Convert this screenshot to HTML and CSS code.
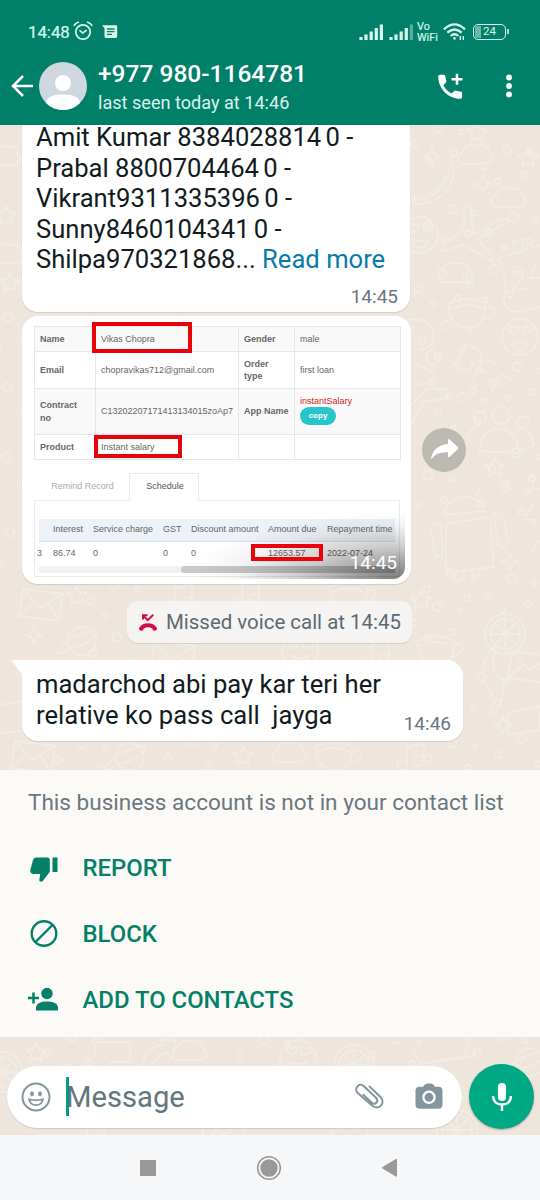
FILE: index.html
```html
<!DOCTYPE html>
<html lang="en">
<head>
<meta charset="utf-8">
<title>Chat</title>
<link rel="stylesheet" href="styles.css">
</head>
<body>
<div class="phone">
  <header class="top">
    <div class="status">
      <span class="clock">14:48</span>
      <svg class="alarm" width="20" height="20" viewBox="0 0 20 20" fill="none" stroke="currentColor" stroke-width="1.7" stroke-linecap="round"><circle cx="10" cy="11" r="7.2"/><path d="M7 9.7l2.7 2.4 3.4-2.6M1.2 4.3Q2.8 1.9 5.3 1.2M18.8 4.3Q17.2 1.9 14.7 1.2"/></svg>
      <svg class="msg" width="16" height="14" viewBox="0 0 16 14"><path fill="currentColor" d="M0 .3h14q1.2 0 1.2 1.2v10q0 1.4-1.4 1.4H4q-1.5 0-1.5-1.5V3.2z"/><path stroke="#008069" stroke-width="1.3" d="M5 4h7.5M5 6.7h7.5M5 9.4h5"/></svg>
      <span class="grow"></span>
      <svg class="bars" width="25" height="16" viewBox="0 0 25 16" stroke="currentColor" stroke-width="3.200"><path d="M2 16v-3M7 16v-5.500M12.200 16V7.500M17.300 16V4M22.400 16V.5"/></svg>
      <svg class="bars2" width="25" height="16" viewBox="0 0 25 16" stroke="currentColor" stroke-width="3.200"><path d="M2 16v-3M7 16v-5.500M12.200 16V7.500M17.300 16V4"/><path opacity=".4" d="M22.400 16V.5"/></svg>
      <span class="vowifi"><span>Vo</span><span>WiFi</span></span>
      <svg class="wifi" width="23" height="18" viewBox="0 0 23 18" fill="none" stroke="currentColor" stroke-width="2.3"><path d="M1 6.300Q11.500-3.500 22 6.300M4.300 9.700q7.200-6.500 14.400 0M7.600 13q3.900-3.500 7.800 0"/><circle cx="11.500" cy="15.400" r="1.300" fill="currentColor" stroke="none"/><path stroke-width="1.400" d="M17.300 13v4M20.300 13v4"/></svg>
      <span class="battery"><span class="level">24</span></span><i class="tip"></i>
    </div>
    <div class="appbar">
      <svg class="back" width="23" height="22" viewBox="0 0 23 22" fill="none" stroke="#fff" stroke-width="2.500"><path d="M22 11H2.500M12 1L2 11l10 10"/></svg>
      <svg class="avatar" width="48" height="48" viewBox="0 0 48 48"><defs><clipPath id="disc"><circle cx="24" cy="24" r="24"/></clipPath></defs><g clip-path="url(#disc)"><path fill="#cfd8df" d="M0 0h48v48H0z"/><circle cx="24" cy="21" r="8" fill="#fff"/><path fill="#fff" d="M7 48V42q0-9.500 17-9.500T41 42v6z"/></g></svg>
      <div class="peer"><div class="number">+977 980-1164781</div><div class="seen">last seen today at 14:46</div></div>
      <svg class="call" width="27" height="27" viewBox="0 0 27 27"><path fill="#fff" d="M3 1.700H6.800q1.500 0 1.600 1.500.2 2.500.9 4.500.4 1-.4 1.800L6.400 12.200q2.800 5.600 8.200 8.400l2.700-2.500q.8-.7 1.800-.4 2 .7 4.500.9 1.500.1 1.500 1.600V24q0 1.800-1.800 1.800C11 25.800 1.200 15.500 1.200 3.500q0-1.800 1.800-1.800z"/><path stroke="#fff" stroke-width="2.500" d="M14.500 6.300h11M20 .8v11"/></svg>
      <svg class="dots" width="6" height="24" viewBox="0 0 6 24" fill="#fff"><circle cx="3" cy="3.500" r="2.900"/><circle cx="3" cy="12" r="2.900"/><circle cx="3" cy="20.500" r="2.900"/></svg>
    </div>
  </header>

  <main class="chat">
    <svg class="wallpaper" width="540" height="1010" viewBox="0 125 540 1010" fill="none" stroke="#f7f1ea" stroke-width="1.800" stroke-linejoin="round" stroke-linecap="round">
      <defs>
        <path id="star" d="M0-9l3 6 7 1-5 4 1 7-6-3-6 3 1-7-5-4 7-1z"/>
        <path id="spark" d="M0-9q1 8 9 9-8 1-9 9-1-8-9-9 8-1 9-9z"/>
        <path id="cloud" d="M-14 8q-8-7 1-12 4-11 14-6 12-3 12 6 8 8-3 12z"/>
        <g id="face"><circle r="18"/><path d="M-9-5q-5-5 0-6 2 0 3 2 4-4 5 0 0 3-6 6zM4-5q-3-6 1-6 2 0 3 2 4-4 5 1 0 3-7 5zM-8 4q8 4 16 0-1 9-8 9t-8-9z"/></g>
        <g id="cup"><path d="M-20-9q19-9 37-1 1 23-15 25-20 0-22-24zM17-5q9-3 9 3t-12 9M-17-4q17-8 31 0"/></g>
        <g id="orange"><circle r="20"/><circle r="15"/><path d="M0-15v30M-15 0h30M-11-11l22 22M-11 11l22-22"/></g>
        <g id="mail"><path d="M-20-14l40 5-4 27-40-5zM-20-14L-3 5 20-9M-24 13L-9 0M16 18L6 2"/></g>
        <g id="planet"><circle r="14"/><path d="M-12 7q-16 10-12 3 7-12 24-17 20-8 15 0-8 11-27 14z"/></g>
        <g id="note"><circle cx="-8" cy="11" r="5"/><circle cx="9" cy="7" r="5"/><path d="M-3 10v-22l17-4V6M-3-7l17-4"/></g>
        <g id="bits"><circle cx="-22" cy="3" r="3.500"/><circle cx="2" cy="-13" r="4.500"/><circle cx="18" cy="12" r="3"/><circle cx="-7" cy="18" r="2.500"/><circle cx="25" cy="-9" r="2.500"/></g>
      </defs>
      <use href="#star" x="477" y="132"/><use href="#star" x="528" y="157"/><use href="#star" x="495" y="467"/><use href="#star" x="421" y="600"/><use href="#star" x="6" y="215"/><use href="#star" x="77" y="595"/><use href="#star" x="36" y="1052"/><use href="#star" x="243" y="755"/><use href="#star" x="10" y="282"/>
      <use href="#spark" x="432" y="157"/><use href="#spark" x="483" y="184"/><use href="#spark" x="510" y="562"/><use href="#spark" x="34" y="635"/><use href="#spark" x="503" y="725"/>
      <use href="#cloud" x="476" y="156"/><use href="#cloud" x="509" y="199"/><use href="#cloud" x="456" y="274"/><use href="#cloud" x="190" y="1052"/><use href="#cloud" x="4" y="157"/><use href="#cloud" x="8" y="255"/>
      <path d="M451 160q6 7 0 23-10 22-38 21v-4q26-1 35-23 2-8 3-17zM446 176q-8 19-34 22"/>
      <path d="M464 207q4-8 7 2l2 26 24-14q12-4 13 0l-33 18 14 15q5 7-1 6l-27-15-20 6q-4-2 2-7l19-15z"/>
      <path d="M498 259l42-14M498 259q10 20 6 36-1 16 11 17l25-5M515 252l-2-11 9-2 2 10M511 272q2-9 10-3 7 6-9 21l14-1M537 263l-8 15h12"/>
      <path d="M465 345l-10 20 8 5q9 2 9-7 9 0 9-8-1-8-16-10zM483 359l-10 20M483 359l12 5M479 368l9 5M501 374l-11 20M501 374l10 5M497 382l8 4M411 405l16-16h20v9l-23 4-14 24"/>
      <circle cx="501" cy="415" r="9"/><circle cx="480" cy="417" r="6"/><circle cx="523" cy="422" r="6"/><path d="M479 451q3-22 20-22t20 24zM468 440q1-14 12-14M517 429q15-2 17 17l-13 4"/>
      <path d="M444 515q4-18 21-18 16 0 21 14zM443 497l6 5M480 488l-3 8M446 524l44-7 4 50-48 6zM441 525q-8-4-10 5l4 25q4 4 8-1zM493 514q6-5 11 4l4 24q-2 9-9 4zM455 571v9q6 3 9-3v-9M471 568l3 10q7 0 6-12"/>
      <path d="M526 482q7-8 9-4l-3 11h8M533 505l-9 15h11l-2 10M532 551q8-14 10-8"/>
      <use href="#face" x="420" y="235"/><use href="#face" x="520" y="337"/><use href="#cup" x="468" y="313"/>
      <path d="M400 329q4-10 13-10 21 1 21 18 0 11-15 12M427 354q5-9 8-1 9-2 5 6-3 5-9 6-7-5-4-11zM414 365q20 4 20 12t-17 7"/>
      <use href="#planet" x="82" y="641"/><use href="#mail" x="43" y="603"/><use href="#mail" x="532" y="665"/><use href="#orange" x="505" y="634"/><use href="#orange" x="354" y="1065"/><use href="#orange" x="2" y="1072"/><use href="#face" x="300" y="652"/><use href="#face" x="298" y="1058"/>
      <use href="#note" x="178" y="595"/><use href="#note" x="245" y="592"/><use href="#cup" x="350" y="596"/><use href="#cup" x="437" y="650"/><use href="#mail" x="175" y="655"/><use href="#note" x="375" y="652"/>
      <path d="M0 705l27-5 2 30-28 3M95 1056v-14h35v20h-19v18M142 1071q0-22 22-27l-5-5 17 2-4 18-6-7q-15 8-17 20M412 1046l8 18 45-8 4-20M420 1064l52-7 3-9M497 648q-9 18 2 30t-5 37q-8 3-3-6 5-10-2-20-13-20 3-41zM507 713l33-7v24l-32 5z"/>
      <use href="#mail" x="35" y="755"/><use href="#planet" x="130" y="757"/><use href="#cup" x="335" y="756"/><use href="#note" x="410" y="754"/><use href="#cloud" x="290" y="754"/><use href="#planet" x="530" y="1062"/><use href="#mail" x="225" y="1130"/><use href="#orange" x="457" y="1130"/><use href="#note" x="90" y="1132"/><use href="#face" x="350" y="1132"/>
      <use href="#bits" x="436" y="141"/><use href="#bits" x="505" y="163"/><use href="#bits" x="450" y="222"/><use href="#bits" x="511" y="230"/><use href="#bits" x="440" y="286"/><use href="#bits" x="492" y="282"/><use href="#bits" x="444" y="338"/><use href="#bits" x="455" y="379"/><use href="#bits" x="515" y="380"/><use href="#bits" x="460" y="410"/><use href="#bits" x="514" y="466"/><use href="#bits" x="426" y="488"/><use href="#bits" x="503" y="500"/><use href="#bits" x="449" y="586"/><use href="#bits" x="510" y="592"/><use href="#bits" x="435" y="620"/><use href="#bits" x="115" y="650"/><use href="#bits" x="112" y="598"/><use href="#bits" x="480" y="690"/><use href="#bits" x="520" y="752"/><use href="#bits" x="190" y="755"/><use href="#bits" x="450" y="756"/><use href="#bits" x="80" y="757"/><use href="#bits" x="500" y="1050"/><use href="#bits" x="262" y="1053"/><use href="#bits" x="70" y="1050"/><use href="#bits" x="394" y="1052"/><use href="#bits" x="6" y="330"/><use href="#bits" x="5" y="400"/><use href="#bits" x="5" y="470"/><use href="#bits" x="8" y="545"/>
    </svg>

    <section class="bubble contacts">
      <p>Amit Kumar 8384028814<span class="thin"> </span>0 -<br>Prabal 8800704464<span class="thin"> </span>0 -<br>Vikrant9311335396<span class="thin"> </span>0 -<br>Sunny8460104341<span class="thin"> </span>0 -<br>Shilpa970321868... <span class="more">Read more</span></p>
      <time>14:45</time>
    </section>

    <div class="photo-row">
      <section class="bubble photo">
        <div class="shot">
          <div class="details">
            <b>Name</b><span>Vikas Chopra</span><b>Gender</b><span>male</span>
            <b>Email</b><span>chopravikas712@gmail.com</span><b>Order<br>type</b><span>first loan</span>
            <b>Contract<br>no</b><span>C13202207171413134015zoAp7</span><b>App Name</b><span class="app"><em>instantSalary</em><i>copy</i></span>
            <b>Product</b><span>Instant salary</span><b></b><span></span>
          </div>
          <div class="tabs"><span class="off">Remind Record</span><span class="on">Schedule</span><span class="rest"></span></div>
          <div class="sheet">
            <div class="cols head"><span></span><span>Interest</span><span>Service charge</span><span>GST</span><span>Discount amount</span><span>Amount due</span><span>Repayment time</span></div>
            <div class="cols"><span class="cut">3</span><span>86.74</span><span>0</span><span>0</span><span>0</span><span>12653.57</span><span>2022-07-24</span></div>
            <div class="scroll"><i></i></div>
          </div>
          <div class="shade"></div>
          <i class="mark m1"></i><i class="mark m2"></i><i class="mark m3"></i>
          <time>14:45</time>
        </div>
      </section>
      <svg class="forward" width="44" height="44" viewBox="0 0 44 44"><circle cx="22" cy="22" r="22" fill="#bcb9b2"/><path fill="#fff" d="M26 11.500q.5-1 1.400-.2l8.600 8q.7.800 0 1.600l-8.600 8q-1 .8-1.400-.4v-4.300Q14 23.500 9 31.500 10.500 17.500 26 16z"/></svg>
    </div>

    <div class="missed">
      <svg width="18" height="17" viewBox="0 0 18 17"><path fill="#d30a47" d="M.6 16q-1-.9-.4-2.300Q3.300 9.300 9 9.300t8.800 4.400q.6 1.400-.4 2.300-1.400 1-2.800.4-1.200-.5-1.300-2-4.300-2.100-8.600 0-.1 1.500-1.300 2-1.400.6-2.800-.4z"/><path fill="none" stroke="#d30a47" stroke-width="2" d="M4 5.500V1.300h4.500M4 1.500l4.800 4.700 5.400-5.400"/></svg>
      <span>Missed voice call at 14:45</span>
    </div>

    <section class="bubble last">
      <svg class="tail" width="13" height="14" viewBox="0 0 13 14"><path fill="#fff" d="M1.200 0H13v14h-3L.6 1.700Q-.2.300 1.200 0z"/></svg>
      <p>madarchod abi pay kar teri her<br>relative ko pass call&nbsp; jayga</p>
      <time>14:46</time>
    </section>

    <section class="unknown">
      <p>This business account is not in your contact list</p>
      <div class="act"><svg width="34" height="32" viewBox="0 0 34 32" fill="#047f68"><path d="M8 5.500h11.500q2.300 0 2.300 2.300v12L14.800 29q-1.800 1.600-3.600-.6l1-6.400H5q-3-.4-2.700-4L5 8q.8-2.500 3-2.500zM24.500 5.500H29.500v14.500h-5z"/></svg><span>REPORT</span></div>
      <div class="act"><svg width="34" height="32" viewBox="0 0 34 32" fill="none" stroke="#047f68" stroke-width="2.400"><circle cx="16" cy="15.500" r="12.300"/><path d="M7.500 24l17-17"/></svg><span>BLOCK</span></div>
      <div class="act"><svg width="34" height="32" viewBox="0 0 34 32" fill="#047f68"><circle cx="19" cy="9.500" r="5.700"/><path d="M8 26.500v-3.500Q9 17.500 19 17.500t11 5.500v3.500z"/><path stroke="#047f68" stroke-width="2.500" d="M0 14h11M5.500 8.500v11"/></svg><span>ADD TO CONTACTS</span></div>
    </section>

    <footer class="composer">
      <div class="field">
        <svg class="smile" width="30" height="30" viewBox="0 0 30 30" fill="none" stroke="#84959d" stroke-width="2"><circle cx="15" cy="15" r="13.500"/><g fill="#84959d" stroke="none"><ellipse cx="11" cy="11.800" rx="1.900" ry="2.500"/><ellipse cx="19" cy="11.800" rx="1.900" ry="2.500"/></g><path stroke-width="1.700" d="M8 17.200q7 1.800 14 0-1 6-7 6t-7-6z"/></svg>
        <i class="caret"></i><span class="hint">Message</span>
        <svg class="clip" width="30" height="28" viewBox="0 0 30 28" fill="none" stroke="#84959d" stroke-width="2" stroke-linecap="round"><path d="M15.500 3.500l11 10.500c5.500 6-1.500 14.200-8.500 8.500L3.700 10C-.5 5.700 5.200-1.300 10 3.200L22 14.800c3.500 3.500-1 8-4.500 4.800L9.300 11.800"/></svg>
        <svg class="cam" width="28" height="27" viewBox="0 0 28 27"><path fill="#84959d" d="M9.500 2q1.500-1.500 3-1.500h3.300q1.800 0 3 1.500l1.300 1.800h3.400q4 0 4 4v13.500q0 4.500-4.500 4.500H5Q.5 25.800.5 21.300V7.800q0-4 4-4H8z"/><circle cx="14" cy="14.300" r="5.600" fill="#84959d" stroke="#fff" stroke-width="2.300"/></svg>
      </div>
      <div class="mic"><svg width="22" height="30" viewBox="0 0 22 30"><rect x="7" y="1" width="8" height="18" rx="4" fill="#fff"/><path fill="none" stroke="#fff" stroke-width="2.400" d="M2 14q.5 8.500 9 8.500T20 14M11 22v7"/></svg></div>
    </footer>
  </main>

  <nav class="keys">
    <i class="square"></i>
    <svg width="26" height="26" viewBox="0 0 26 26"><circle cx="13" cy="13" r="11.300" fill="none" stroke="#999" stroke-width="1.600"/><circle cx="13" cy="13" r="8.700" fill="#999"/></svg>
    <svg width="18" height="20" viewBox="0 0 18 20"><path fill="#999" d="M16 1.500v16.500q0 1-1.200.5L1.500 10.600q-1-.8 0-1.500L14.800 1q1.200-.6 1.200.5z"/></svg>
  </nav>
</div>
</body>
</html>
```
FILE: styles.css
```css
* { box-sizing: border-box; }
body { margin: 0; font-family: Roboto, sans-serif; }
p { margin: 0; }
svg { display: block; flex: none; }
.phone { width: 540px; height: 1200px; overflow: hidden; display: flex; flex-direction: column; }

/* status and app bar */
.top { height: 125px; flex: none; background: #008069; color: #fff; position: relative; z-index: 2; }
.status { height: 46px; padding: 17px 32px 0 28px; display: flex; align-items: center; color: #d8f7ec; }
.clock { font-size: 16.800px; width: 45px; white-space: nowrap; -webkit-text-stroke: .2px; }
.alarm { margin: -1px 9px 0 0; }
.grow { flex: 1; }
.bars { margin-left: -2px; }
.bars2 { margin-left: 5px; }
.vowifi { width: 22px; margin: 0 4px 0 3px; display: flex; flex-direction: column; font-size: 10.800px; line-height: 11px; -webkit-text-stroke: .2px; }
.battery { margin-left: 7px; width: 33px; height: 16px; border: 1.800px solid; border-radius: 5px; padding: 1px; display: flex; }
.level { flex: 1; border-radius: 2px; background: linear-gradient(90deg, #68b9a7 22%, transparent 22%); font-size: 11.500px; line-height: 11px; text-align: center; }
.tip { width: 2px; height: 5px; margin-left: 1px; background: #a9dccd; margin-right: -1px; }
.appbar { height: 79px; padding: 1px 28px 0 11px; display: flex; align-items: center; }
.avatar { margin-left: 5px; }
.peer { margin-left: 11px; flex: 1; white-space: nowrap; padding-top: 2px; }
.number { font-size: 24.500px; line-height: 28px; font-weight: 500; }
.seen { font-size: 18.100px; line-height: 22px; margin-top: 4px; color: #dcf1ec; }
.dots { margin-left: 42px; }

/* conversation */
.chat { height: 1010px; position: relative; background: #eee6dd; overflow: hidden; display: flex; flex-direction: column; align-items: flex-start; }
.wallpaper { position: absolute; top: 0; left: 0; opacity: .55; }
.chat > :not(.wallpaper) { position: relative; flex: none; }
.bubble { background: #fff; border-radius: 16px; box-shadow: 0 1px 1px #0000001f; margin-left: 22px; color: #111b21; }
.bubble p { font-size: 25.600px; line-height: 30.500px; white-space: nowrap; }
.bubble time { font-size: 19px; line-height: 22px; color: #697780; }
.contacts { width: 388px; height: 199px; margin-top: -12px; padding: 9px 12px 0 14px; display: flex; flex-direction: column; }
.contacts time { align-self: flex-end; margin-top: 11px; }
.thin { font-size: 17px; line-height: 0; }
.more { color: #087bab; }

.photo-row { margin-top: 4px; display: flex; align-items: center; gap: 11px; }
.photo { width: 389px; height: 268px; padding: 5px 6px; }
.shot { position: relative; height: 258px; border-radius: 12px; overflow: hidden; padding: 5px 5px 0 6px; font: 9px/12.500px "Liberation Sans", Arial, sans-serif; color: #666; }
.details { display: grid; grid-template-columns: 61px 143px 56px 106px; grid-template-rows: 25px 37px 46px 25px; border: solid #e6e6e6; border-width: 1px 0 0 1px; width: 367px; }
.details > * { border: solid #e6e6e6; border-width: 0 1px 1px 0; padding-left: 5px; display: flex; align-items: center; white-space: nowrap; }
.details > :nth-child(8n+1), .details > :nth-child(8n+2), .details > :nth-child(8n+3), .details > :nth-child(8n+4) { background: #f9f9f9; }
.details .app { flex-direction: column; align-items: flex-start; justify-content: center; }
.app em { font-style: normal; color: #d11e1e; line-height: 11px; }
.app i { font-style: normal; font-weight: bold; font-size: 8px; background: #27c5c9; color: #fff; border-radius: 10px; width: 36px; height: 18px; line-height: 17px; text-align: center; margin-bottom: 3px; }
.tabs { height: 28px; margin-top: 13px; display: flex; text-align: center; line-height: 27px; }
.off { width: 95px; color: #a3abb4; border-bottom: 1px solid #e8eaec; padding-left: 2px; }
.on { width: 70px; color: #555; border: solid #e8eaec; border-width: 1px 1px 0; padding-left: 2px; line-height: 25px; }
.rest { flex: 1; border-bottom: 1px solid #e8eaec; }
.sheet { height: 76px; padding: 18px 4px 0; border: solid #e8eaec; border-width: 0 1px 1px; }
.cols { display: grid; grid-template-columns: 14px 40px 70px 28px 77px 59px 70px; white-space: nowrap; line-height: 22px; height: 24px; }
.cols.head { background: #edf2f8; border-bottom: 1px solid #dde1e5; height: 23px; line-height: 20px; }
.cut { margin-left: -2px; }
.scroll { height: 7px; background: #f1f1f1; }
.scroll i { display: block; margin-left: 142px; height: 7px; border-radius: 4px 0 0 4px; background: #c9c9c9; }
.shade { position: absolute; right: 0; bottom: 0; width: 230px; height: 84px; background: radial-gradient(ellipse 215px 68px at 100% 100%, #00000085 0%, #00000062 22%, #00000030 50%, #0000000c 78%, #0000 100%); }
.mark { position: absolute; border: 4px solid #e80209; }
.m1 { left: 64px; top: 1px; width: 100px; height: 31px; }
.m2 { left: 66px; top: 114px; width: 88px; height: 23px; }
.m3 { left: 223px; top: 223px; width: 72px; height: 17px; }
.shot time { position: absolute; right: 8px; bottom: 5px; font-family: Roboto, sans-serif; color: #fff; }

.missed { margin: 17px 0 0 127px; width: 285px; height: 42px; border-radius: 11px; background: #f5f4f2; box-shadow: 0 1px 1px #0000001c; display: flex; align-items: center; padding-left: 12px; font-size: 20.450px; color: #5b6a72; white-space: nowrap; }
.missed span { margin-left: 9px; }
.last { margin-top: 17px; width: 441px; height: 81px; padding: 9px 12px 0 14px; display: flex; justify-content: space-between; border-top-left-radius: 0; }
.tail { position: absolute; left: -10px; top: 0; }
.last time { margin-top: 44px; }
.unknown { margin-top: 29px; width: 540px; height: 267px; background: #fbfaf8f7; padding: 18px 28px 0; }
.unknown p { font-size: 22.550px; line-height: 30px; color: #6b7780; white-space: nowrap; margin-bottom: 17px; }
.act { height: 66px; display: flex; align-items: center; font-size: 23.900px; font-weight: 500; color: #047f68; white-space: nowrap; }
.act span { margin-left: 20.500px; }

.composer { margin-top: 27px; width: 540px; padding-left: 7px; display: flex; gap: 7px; align-items: center; }
.field { width: 455px; height: 62px; border-radius: 31px; background: #fff; box-shadow: 0 1px 1px #0002; display: flex; align-items: center; padding: 0 19px 0 14px; }
.caret { width: 3px; height: 39px; background: #009f80; margin: -1px -3px 0 15px; }
.hint { font-size: 29.200px; color: #64757e; flex: 1; padding-top: 1px; }
.cam { margin-left: 31px; }
.mic { width: 65px; height: 65px; border-radius: 50%; background: #00a884; box-shadow: 0 1px 2px #0004; display: grid; place-items: center; }
.keys { height: 65px; background: #f6f7f9; padding: 0 141px 0 140px; display: flex; align-items: center; justify-content: space-between; }
.square { width: 16px; height: 16px; background: #999; }
```
